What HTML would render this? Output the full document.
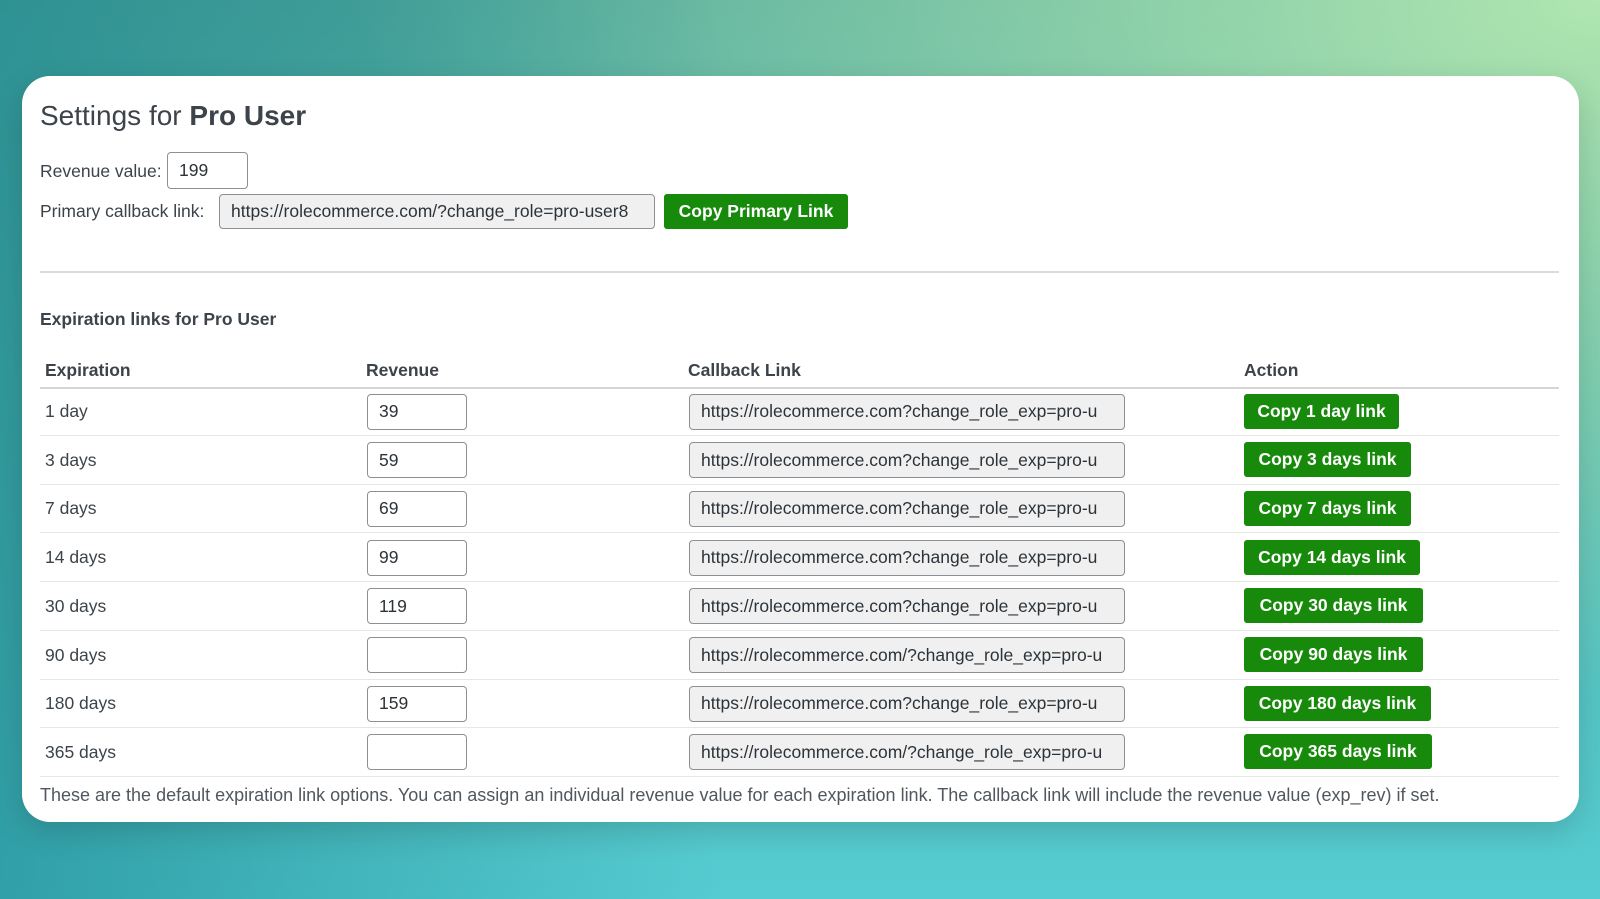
<!DOCTYPE html>
<html><head><meta charset="utf-8"><style>
*{box-sizing:border-box;margin:0;padding:0}
body{width:1600px;height:899px;overflow:hidden;font-family:"Liberation Sans",Arial,sans-serif;color:#3c434a;
background:radial-gradient(ellipse at 100% 0%,#b0e6b0 0%,rgba(160,220,170,0) 55%),linear-gradient(180deg,#4fa89c 0%,#55b8ae 40%,#55ccd2 100%);position:relative}
.bg2{position:absolute;inset:0;background:linear-gradient(90deg,rgba(25,130,140,.6) 0%,rgba(30,140,140,0) 45%);}
.card{position:absolute;left:22px;top:76px;width:1557px;height:746px;background:#fff;border-radius:28px;box-shadow:0 10px 30px rgba(0,0,0,.15)}
.a{position:absolute;white-space:nowrap;font-size:17.5px;line-height:1}
.in{position:absolute;border:1px solid #8c8f94;border-radius:4px;background:#fff;font-size:17.5px;padding-left:11px;display:flex;align-items:center;white-space:nowrap;overflow:hidden;color:#2c3338}
.ro{background:#f0f0f1}
.btn{position:absolute;background:#178a0b;color:#fff;font-weight:bold;font-size:17.5px;border-radius:3px;display:flex;align-items:center;justify-content:center;white-space:nowrap}
.line{position:absolute;left:40px;width:1519px;height:1px;background:#e6e6e6}
</style></head><body><div class="bg2"></div>
<div class="card"></div>
<div class="a" style="left:40px;top:102px;font-size:28px;color:#3c434a">Settings for <b>Pro User</b></div>
<div class="a" style="left:40px;top:163px">Revenue value:</div>
<div class="in" style="left:167px;top:152px;width:81px;height:37px">199</div>
<div class="a" style="left:40px;top:203px">Primary callback link:</div>
<div class="in ro" style="left:219px;top:194px;width:436px;height:35px">https://rolecommerce.com/?change_role=pro-user8</div>
<div class="btn" style="left:664px;top:194px;width:184px;height:35px">Copy Primary Link</div>
<div class="line" style="top:271px;background:#dcdcde;height:1.5px"></div>
<div class="a" style="left:40px;top:311px;font-weight:bold;font-size:17.5px">Expiration links for Pro User</div>
<div class="a" style="left:45px;top:362px;font-weight:bold">Expiration</div>
<div class="a" style="left:366px;top:362px;font-weight:bold">Revenue</div>
<div class="a" style="left:688px;top:362px;font-weight:bold">Callback Link</div>
<div class="a" style="left:1244px;top:362px;font-weight:bold">Action</div>
<div class="line" style="top:387px;background:#d5d5d5;height:2px"></div>
<div id="rows"></div>
<div class="a" style="left:40px;top:786px;font-size:18px;color:#50575e">These are the default expiration link options. You can assign an individual revenue value for each expiration link. The callback link will include the revenue value (exp_rev) if set.</div>
<script>
var d=[["1 day","39","https://rolecommerce.com?change_role_exp=pro-u","Copy 1 day link",155],
["3 days","59","https://rolecommerce.com?change_role_exp=pro-u","Copy 3 days link",167],
["7 days","69","https://rolecommerce.com?change_role_exp=pro-u","Copy 7 days link",167],
["14 days","99","https://rolecommerce.com?change_role_exp=pro-u","Copy 14 days link",176],
["30 days","119","https://rolecommerce.com?change_role_exp=pro-u","Copy 30 days link",179],
["90 days","","https://rolecommerce.com/?change_role_exp=pro-u","Copy 90 days link",179],
["180 days","159","https://rolecommerce.com?change_role_exp=pro-u","Copy 180 days link",187],
["365 days","","https://rolecommerce.com/?change_role_exp=pro-u","Copy 365 days link",188]];
var h="";d.forEach(function(r,i){var c=411+i*48.7;
h+='<div class="a" style="left:45px;top:'+(c-8)+'px">'+r[0]+'</div>';
h+='<div class="in" style="left:367px;top:'+(c-17.5)+'px;width:100px;height:36px">'+r[1]+'</div>';
h+='<div class="in ro" style="left:689px;top:'+(c-17.5)+'px;width:436px;height:36px;padding-right:10px">'+r[2]+'</div>';
h+='<div class="btn" style="left:1244px;top:'+(c-17.5)+'px;width:'+r[4]+'px;height:35px">'+r[3]+'</div>';
h+='<div class="line" style="top:'+(c+24)+'px"></div>';});
document.getElementById("rows").innerHTML=h;
</script>
</body></html>
